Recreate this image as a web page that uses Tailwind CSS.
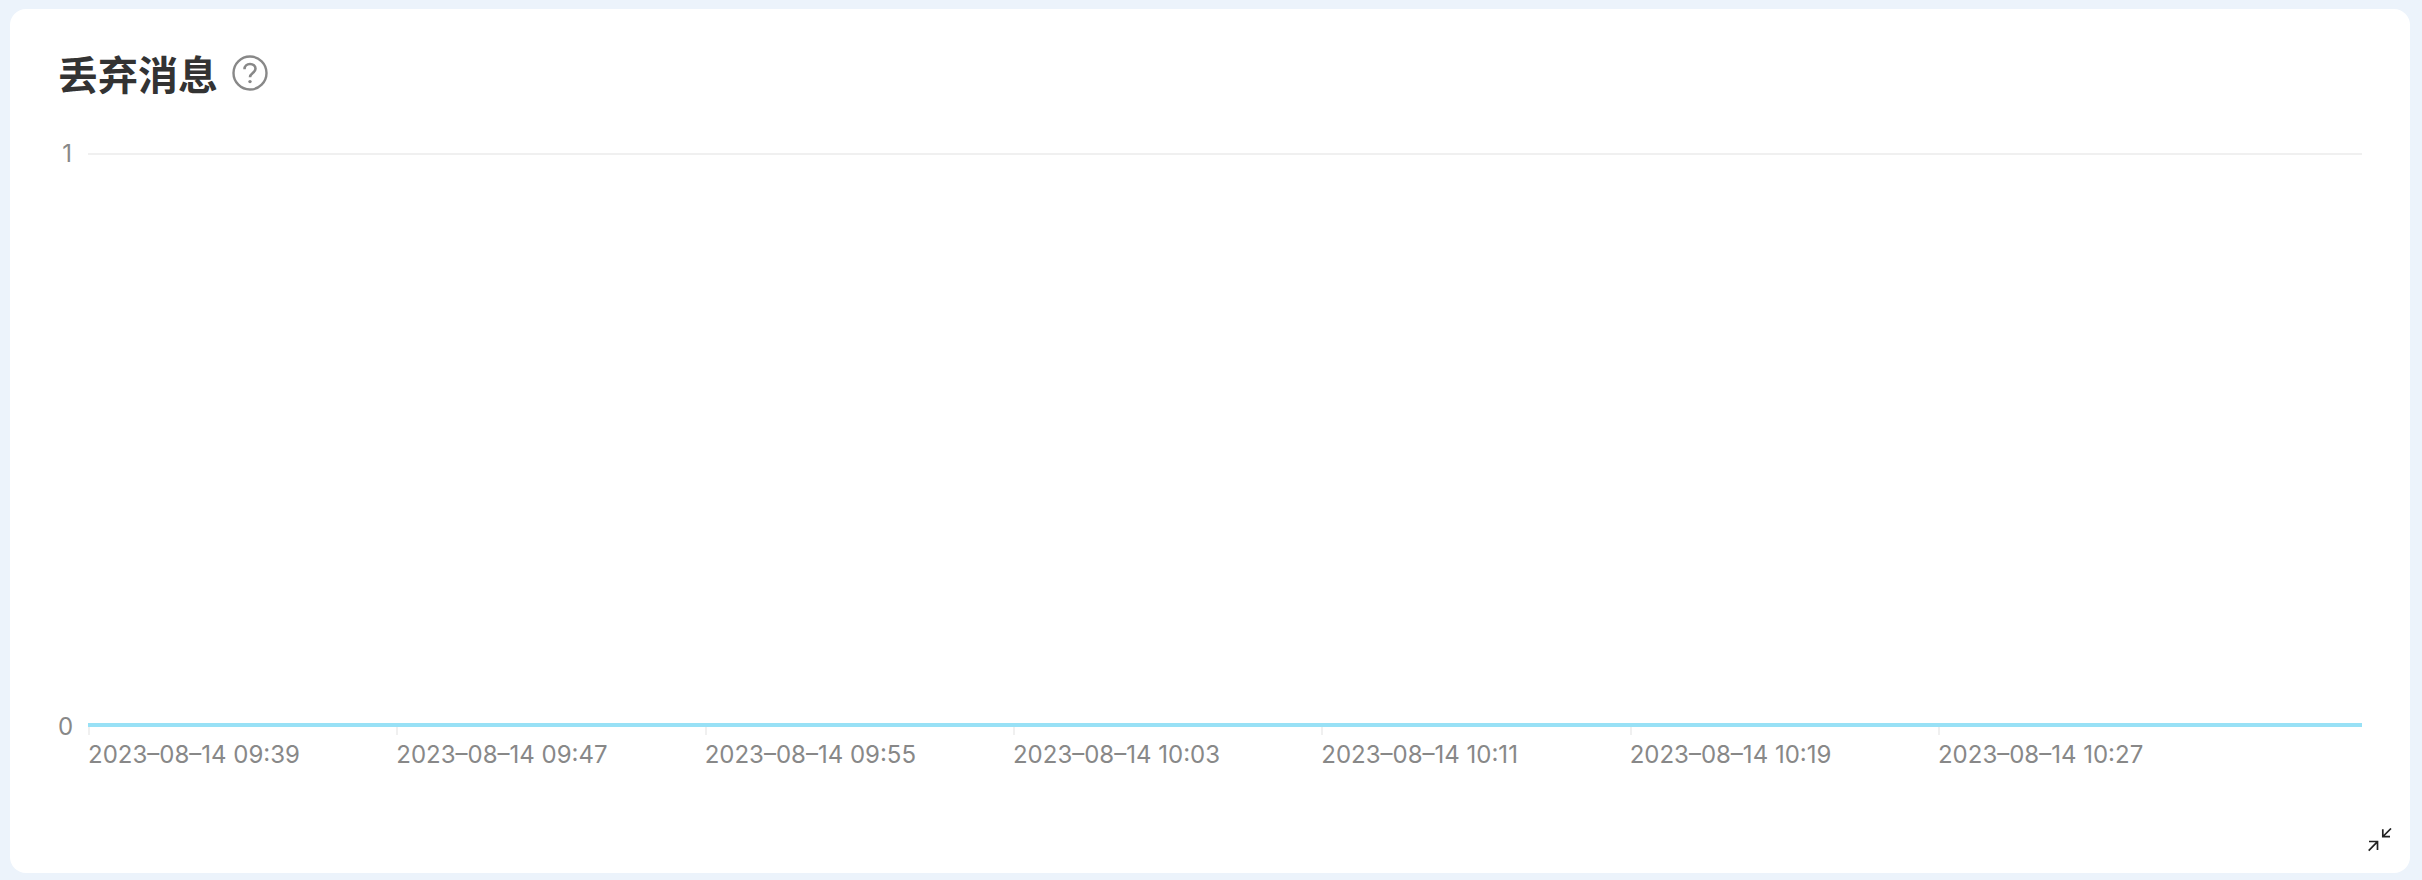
<!DOCTYPE html>
<html lang="en">
<head>
  <meta charset="UTF-8">
  <title>丢弃消息</title>
  <script src="https://cdn.jsdelivr.net/npm/@tailwindcss/browser@4"></script>
</head>
<body class="bg-[#ecf3fb] h-[880px] overflow-hidden font-['Inter','Noto_Sans_CJK_SC',sans-serif]">
  <div class="pt-[9px] pl-[10px]">
    <div class="relative w-[2400px] h-[864px] rounded-[16px] bg-white pl-[48px]">
      <div class="flex items-center gap-[14px] pt-[20px] h-[108px]">
        <h1 class="text-[40px] leading-[48px] font-bold text-[#333] font-['Noto_Sans_CJK_SC',sans-serif]">丢弃消息</h1>
        <svg class="w-[36px] h-[36px]" viewBox="0 0 36 36" fill="none" stroke="#888" stroke-width="2.4">
          <circle cx="18" cy="18" r="16.5"/>
          <path d="M12.5 14.2c0-3.2 2.4-5.2 5.5-5.2s5.5 2 5.5 4.8c0 4.2-5.5 4.2-5.5 8.4" stroke-width="2.6"/>
          <circle cx="18" cy="26.6" r="1.7" fill="#888" stroke="none"/>
        </svg>
      </div>

      <div class="mt-[36px] flex items-center h-[2px]">
        <span class="w-[30px] pr-[16px] text-right text-[24px] text-[#888]">1</span>
        <div class="w-[2274px] h-[2px] bg-[#f0f0f0]"></div>
      </div>
      <div class="mt-[568px] flex items-center h-[4px]">
        <span class="w-[30px] pr-[16px] text-right text-[24px] text-[#888] pt-[3px]">0</span>
        <div class="w-[2274px] h-[4px] shrink-0 bg-[#98e1f6]"></div>
      </div>

      <div class="ml-[30px] flex text-[24px] leading-[28px] text-[#888]">
        <div class="w-[308.33px]"><div class="w-[2px] h-[8px] bg-[#f0f0f0]"></div><div class="mt-[6px] whitespace-nowrap">2023–08–14 09:39</div></div>
        <div class="w-[308.33px]"><div class="w-[2px] h-[8px] bg-[#f0f0f0]"></div><div class="mt-[6px] whitespace-nowrap">2023–08–14 09:47</div></div>
        <div class="w-[308.33px]"><div class="w-[2px] h-[8px] bg-[#f0f0f0]"></div><div class="mt-[6px] whitespace-nowrap">2023–08–14 09:55</div></div>
        <div class="w-[308.33px]"><div class="w-[2px] h-[8px] bg-[#f0f0f0]"></div><div class="mt-[6px] whitespace-nowrap">2023–08–14 10:03</div></div>
        <div class="w-[308.33px]"><div class="w-[2px] h-[8px] bg-[#f0f0f0]"></div><div class="mt-[6px] whitespace-nowrap">2023–08–14 10:11</div></div>
        <div class="w-[308.33px]"><div class="w-[2px] h-[8px] bg-[#f0f0f0]"></div><div class="mt-[6px] whitespace-nowrap">2023–08–14 10:19</div></div>
        <div class="w-[308.33px]"><div class="w-[2px] h-[8px] bg-[#f0f0f0]"></div><div class="mt-[6px] whitespace-nowrap">2023–08–14 10:27</div></div>
      </div>

      <svg class="absolute left-[2358px] top-[819px] w-[24px] h-[24px]" viewBox="0 0 24 24" fill="none" stroke="#222" stroke-width="1.7">
        <path d="M23 .5 15 8.5M14.8 1.3v7.4H22M.7 22.7l8.8-9M1 13.5h8.5V22"/>
      </svg>
    </div>
  </div>
</body>
</html>
